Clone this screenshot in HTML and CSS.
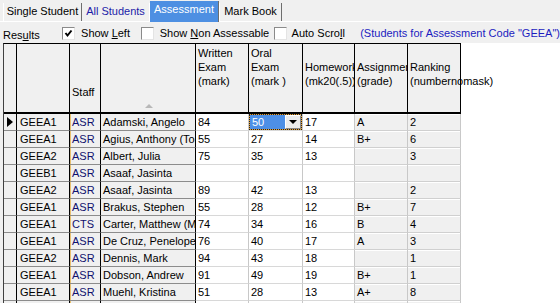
FILE: index.html
```html
<!DOCTYPE html>
<html>
<head>
<meta charset="utf-8">
<link rel="stylesheet" href="styles.css">
</head>
<body>
<div class="tabs">
  <div class="tab t1">Single Student</div>
  <div class="tab t2 link">All Students</div>
  <div class="tab t3 active">Assessment</div>
  <div class="tab t4">Mark Book</div>
</div>
<div class="toolbar">
  <span class="results">Res<u>u</u>lts</span>
  <label class="opt o1"><span class="cb"><svg width="11" height="11" viewBox="0 0 11 11"><polyline points="2.5,5 4.5,7.5 8.5,2.5" fill="none" stroke="#000" stroke-width="2"/></svg></span><span>Show <u>L</u>eft</span></label>
  <label class="opt o2"><span class="cb"></span><span>Show <u>N</u>on Assessable</span></label>
  <label class="opt o3"><span class="cb"></span><span>Auto Scro<u>l</u>l</span></label>
  <span class="note">(Students for Assessment Code "GEEA")</span>
</div>
<div class="gridwrap">
  <div class="grid">
    <div class="c h"></div>
    <div class="c h"></div>
    <div class="c h staffh">Staff</div>
    <div class="c h nameh"><i class="sort"></i></div>
    <div class="c h">Written<br>Exam<br>(mark)</div>
    <div class="c h">Oral<br>Exam<br>(mark )</div>
    <div class="c h low">Homework<br>(mk20(.5))</div>
    <div class="c h low">Assignment<br>(grade)</div>
    <div class="c h low last">Ranking<br>(numbernomask)</div>

    <div class="c fx ind"><i class="cur"></i></div><div class="c fx code">GEEA1</div><div class="c fx staff">ASR</div><div class="c fx">Adamski, Angelo</div><div class="c ed">84</div><div class="c ed sel"><div class="focus"><span class="selval">50</span><span class="ddbtn"><i></i></span></div></div><div class="c ed">17</div><div class="c ro">A</div><div class="c ro">2</div>

    <div class="c fx ind"></div><div class="c fx code">GEEA1</div><div class="c fx staff">ASR</div><div class="c fx">Agius, Anthony (Tony)</div><div class="c ed">55</div><div class="c ed">27</div><div class="c ed">14</div><div class="c ro">B+</div><div class="c ro">6</div>

    <div class="c fx ind"></div><div class="c fx code">GEEA2</div><div class="c fx staff">ASR</div><div class="c fx">Albert, Julia</div><div class="c ed">75</div><div class="c ed">35</div><div class="c ed">13</div><div class="c ro"></div><div class="c ro">3</div>

    <div class="c fx ind"></div><div class="c fx code">GEEB1</div><div class="c fx staff">ASR</div><div class="c fx">Asaaf, Jasinta</div><div class="c ed"></div><div class="c ed"></div><div class="c ed"></div><div class="c ro"></div><div class="c ro"></div>

    <div class="c fx ind"></div><div class="c fx code">GEEA2</div><div class="c fx staff">ASR</div><div class="c fx">Asaaf, Jasinta</div><div class="c ed">89</div><div class="c ed">42</div><div class="c ed">13</div><div class="c ro"></div><div class="c ro">2</div>

    <div class="c fx ind"></div><div class="c fx code">GEEA1</div><div class="c fx staff">ASR</div><div class="c fx">Brakus, Stephen</div><div class="c ed">55</div><div class="c ed">28</div><div class="c ed">12</div><div class="c ro">B+</div><div class="c ro">7</div>

    <div class="c fx ind"></div><div class="c fx code">GEEA1</div><div class="c fx staff">CTS</div><div class="c fx">Carter, Matthew (Matt)</div><div class="c ed">74</div><div class="c ed">34</div><div class="c ed">16</div><div class="c ro">B</div><div class="c ro">4</div>

    <div class="c fx ind"></div><div class="c fx code">GEEA1</div><div class="c fx staff">ASR</div><div class="c fx">De Cruz, Penelope</div><div class="c ed">76</div><div class="c ed">40</div><div class="c ed">17</div><div class="c ro">A</div><div class="c ro">3</div>

    <div class="c fx ind"></div><div class="c fx code">GEEA2</div><div class="c fx staff">ASR</div><div class="c fx">Dennis, Mark</div><div class="c ed">94</div><div class="c ed">43</div><div class="c ed">18</div><div class="c ro"></div><div class="c ro">1</div>

    <div class="c fx ind"></div><div class="c fx code">GEEA1</div><div class="c fx staff">ASR</div><div class="c fx">Dobson, Andrew</div><div class="c ed">91</div><div class="c ed">49</div><div class="c ed">19</div><div class="c ro">B+</div><div class="c ro">1</div>

    <div class="c fx ind"></div><div class="c fx code">GEEA1</div><div class="c fx staff">ASR</div><div class="c fx">Muehl, Kristina</div><div class="c ed">51</div><div class="c ed">28</div><div class="c ed">13</div><div class="c ro">A+</div><div class="c ro">8</div>

    <div class="c fx ind"></div><div class="c fx code"></div><div class="c fx staff"></div><div class="c fx"></div><div class="c ed"></div><div class="c ed"></div><div class="c ed"></div><div class="c ro"></div><div class="c ro"></div>
  </div>
</div>
</body>
</html>
```

FILE: styles.css
```css
* { box-sizing: border-box; }
html, body {
  margin: 0;
  padding: 0;
  width: 560px;
  height: 303px;
  overflow: hidden;
  background: #f0f0f0;
  font-family: "Liberation Sans", Arial, sans-serif;
  font-size: 11px;
  color: #000;
}

/* ---------- tabs ---------- */
.tabs {
  display: flex;
  align-items: flex-end;
  height: 22px;
  padding-left: 3px;
  border-bottom: 1px solid #fff;
}
.tab {
  height: 18px;
  padding-top: 2px;
  line-height: 13px;
  text-align: center;
  white-space: nowrap;
  border-left: 1px solid #fff;
  border-right: 1px solid #6e6e6e;
}
.t1 { width: 79px; }
.t2 { width: 68px; border-right-color: #fff; border-left: none; }
.t3 { width: 69px; }
.t4 { width: 63px; }
.link { color: #1c1ca8; }
.active {
  height: 21px;
  margin-bottom: -1px;
  padding-top: 2px;
  background: #4d8fe2;
  color: #fff;
  border-left: none;
}

/* ---------- toolbar ---------- */
.toolbar {
  display: flex;
  align-items: center;
  height: 21px;
  padding-left: 3px;
  white-space: nowrap;
}
.results { width: 60px; margin-top: 4px; }
.opt { display: flex; align-items: center; white-space: pre; }
.o1 { width: 80px; }
.o2 { width: 135px; }
.o3 { width: 88px; }
.cb {
  flex: none;
  width: 13px;
  height: 13px;
  margin-right: 6px;
  margin-top: 1px;
  background: #fff;
  border: 1px solid;
  border-color: #8a8a8a #e4e4e4 #e4e4e4 #8a8a8a;
  display: flex;
  align-items: center;
  justify-content: center;
}
.o3 .cb { margin-right: 5px; }
.note { color: #1c1cc0; }

/* ---------- grid ---------- */
.gridwrap {
  margin-left: 3px;
  height: 260px;
  background: #fff;
  overflow: hidden;
}
.grid {
  display: grid;
  width: 458px;
  grid-template-columns: 13px 53px 31px 95px 53px 54px 52px 53px 53px;
  grid-template-rows: 70px;
  grid-auto-rows: 17px;
  border-top: 1px solid #000;
  border-left: 1px solid #404040;
}
.c {
  overflow: hidden;
  white-space: nowrap;
  padding-left: 2px;
  line-height: 16px;
}
.h {
  background: #f0f0f0;
  border-right: 1px solid #000;
  border-bottom: 2px solid #000;
  padding-top: 2px;
  line-height: 14px;
}
.h.low { padding-top: 16px; }
.h.staffh { padding-top: 41px; }
.h.last { overflow: visible; }
.nameh {
  display: flex;
  justify-content: center;
  align-items: flex-end;
  padding-bottom: 4px;
}
.sort {
  width: 0;
  height: 0;
  border-left: 4px solid transparent;
  border-right: 4px solid transparent;
  border-bottom: 4px solid #b8b8b8;
}

.fx {
  background: #f0f0f0;
  border-right: 1px solid #000;
  border-bottom: 1px solid #8c8c8c;
}
.code { padding-left: 3px; }
.staff {
  color: #10106e;
  box-shadow: inset 1px 0 0 #e8c070;
}
.ed {
  background: #fff;
  border-right: 1px solid #c8c8c8;
  border-bottom: 1px solid #d8d8d8;
}
.ro {
  background: #f0f0f0;
  border-right: 1px solid #c8c8c8;
  border-bottom: 1px solid #d0d0d0;
  box-shadow: inset 0 1px 0 #fff;
}

.ind {
  padding-left: 3px;
  display: flex;
  align-items: center;
}
.cur {
  width: 0;
  height: 0;
  border-top: 5px solid transparent;
  border-bottom: 5px solid transparent;
  border-left: 6px solid #000;
}

.sel { padding: 0; }
.focus {
  display: flex;
  height: 100%;
  border: 1px dotted #222;
  background: #e8a030;
}
.selval {
  flex: 1;
  background: #4d8fe6;
  color: #fff;
  padding-left: 2px;
  line-height: 14px;
}
.ddbtn {
  width: 16px;
  background: #ececec;
  border: 1px solid;
  border-color: #fff #8a8a8a #8a8a8a #fff;
  display: flex;
  align-items: center;
  justify-content: center;
}
.ddbtn i {
  width: 0;
  height: 0;
  border-left: 4px solid transparent;
  border-right: 4px solid transparent;
  border-top: 4px solid #000;
}
```
